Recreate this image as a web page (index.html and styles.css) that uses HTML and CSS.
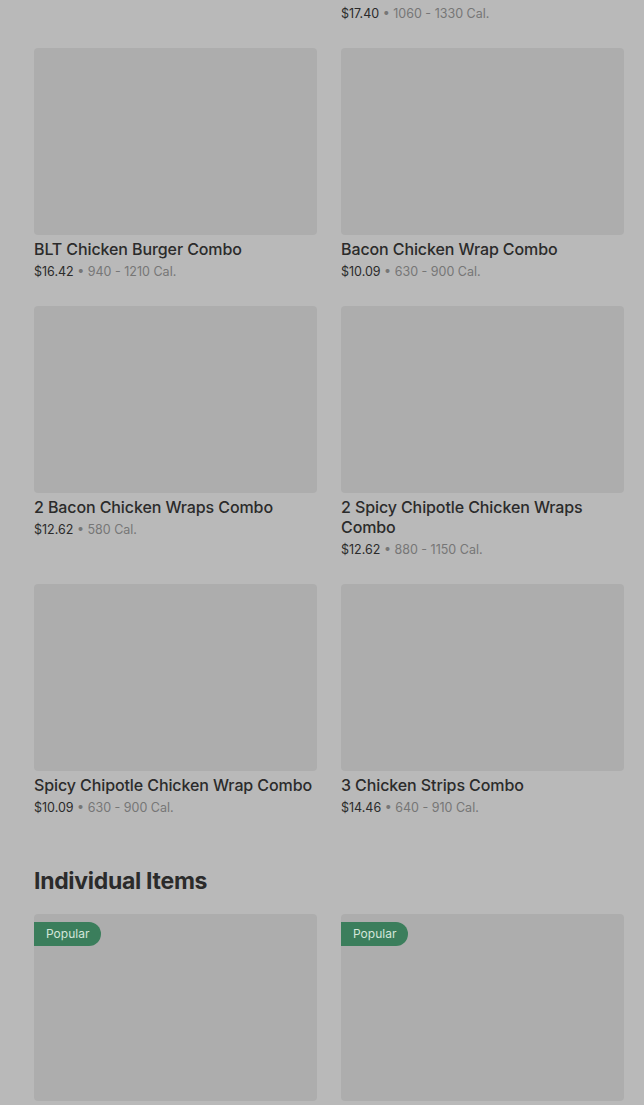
FILE: index.html
```html
<!DOCTYPE html>
<html lang="en">
<head>
    <meta charset="UTF-8">
    <meta name="viewport" content="width=device-width, initial-scale=1.0">
    <title>Menu</title>
    <link rel="stylesheet" href="styles.css">
</head>
<body>
    <main class="menu">
        <!-- Combos (scrolled partly out of view) -->
        <section class="grid">
            <div class="card">
                <div class="thumb"></div>
                <h3 class="name">Chicken Sandwich Combo</h3>
                <p class="meta"><span class="price">$11.99</span> &bull; 780 - 1050 Cal.</p>
            </div>
            <div class="card">
                <div class="thumb"></div>
                <h3 class="name">2 Spicy Chicken Sandwiches Meal Combo</h3>
                <p class="meta"><span class="price">$17.40</span> &bull; 1060 - 1330 Cal.</p>
            </div>
            <div class="card">
                <div class="thumb"></div>
                <h3 class="name">BLT Chicken Burger Combo</h3>
                <p class="meta"><span class="price">$16.42</span> &bull; 940 - 1210 Cal.</p>
            </div>
            <div class="card">
                <div class="thumb"></div>
                <h3 class="name">Bacon Chicken Wrap Combo</h3>
                <p class="meta"><span class="price">$10.09</span> &bull; 630 - 900 Cal.</p>
            </div>
            <div class="card">
                <div class="thumb"></div>
                <h3 class="name">2 Bacon Chicken Wraps Combo</h3>
                <p class="meta"><span class="price">$12.62</span> &bull; 580 Cal.</p>
            </div>
            <div class="card">
                <div class="thumb"></div>
                <h3 class="name">2 Spicy Chipotle Chicken Wraps Combo</h3>
                <p class="meta"><span class="price">$12.62</span> &bull; 880 - 1150 Cal.</p>
            </div>
            <div class="card">
                <div class="thumb"></div>
                <h3 class="name">Spicy Chipotle Chicken Wrap Combo</h3>
                <p class="meta"><span class="price">$10.09</span> &bull; 630 - 900 Cal.</p>
            </div>
            <div class="card">
                <div class="thumb"></div>
                <h3 class="name">3 Chicken Strips Combo</h3>
                <p class="meta"><span class="price">$14.46</span> &bull; 640 - 910 Cal.</p>
            </div>
        </section>

        <h2 class="section-title">Individual Items</h2>

        <section class="grid">
            <div class="card">
                <div class="thumb">
                    <span class="badge">Popular</span>
                </div>
                <h3 class="name">Chicken Sandwich</h3>
                <p class="meta"><span class="price">$7.29</span> &bull; 480 Cal.</p>
            </div>
            <div class="card">
                <div class="thumb">
                    <span class="badge">Popular</span>
                </div>
                <h3 class="name">Spicy Chicken Sandwich</h3>
                <p class="meta"><span class="price">$7.29</span> &bull; 510 Cal.</p>
            </div>
        </section>
    </main>
</body>
</html>
```

FILE: styles.css
```css
* {
    margin: 0;
    padding: 0;
    box-sizing: border-box;
}

html, body {
    height: 100%;
    overflow: hidden;
}

body {
    font-family: 'Inter', 'Roboto', sans-serif;
    background: #b9b9b9; /* page under a dim overlay */
    color: #2b2b2b;
}

.menu {
    padding: 0 20px 0 34px;
    margin-top: -230px; /* page is scrolled */
}

.grid {
    display: grid;
    grid-template-columns: 283px 283px;
    column-gap: 24px;
    row-gap: 24px;
}

.thumb {
    position: relative;
    height: 187px;
    background: #adadad;
    border-radius: 4px;
}

.name {
    margin-top: 4px;
    font-size: 16px;
    line-height: 20px;
    font-weight: 500;
    letter-spacing: -0.1px;
    color: #2b2b2b;
}

.meta {
    margin-top: 3px;
    font-size: 12.5px;
    line-height: 20px;
    color: #767676;
}

.price {
    color: #2b2b2b;
}

.section-title {
    margin: 47px 0 17px;
    font-size: 23px;
    line-height: 32px;
    font-weight: 700;
    letter-spacing: -0.3px;
    color: #2b2b2b;
}

.badge {
    position: absolute;
    top: 8px;
    left: 0;
    padding: 0 12px;
    height: 24px;
    line-height: 24px;
    font-size: 12px;
    color: #d4e6da;
    background: #3b7e5c;
    border-radius: 0 12px 12px 0;
}
```
